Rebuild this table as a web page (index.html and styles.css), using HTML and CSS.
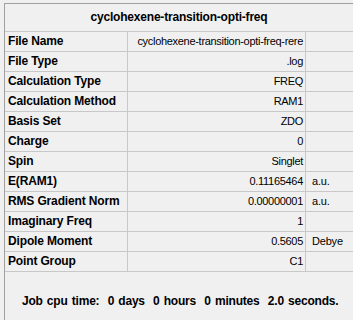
FILE: index.html
```html
<!DOCTYPE html>
<html>
<head>
<meta charset="utf-8">
<link rel="stylesheet" href="styles.css">
</head>
<body>
<div class="panel">
  <div class="title">cyclohexene-transition-opti-freq</div>
  <div class="grid">
    <div class="lbl">File Name</div><div class="val">cyclohexene-transition-opti-freq-rere</div><div class="unit"></div>
    <div class="lbl">File Type</div><div class="val">.log</div><div class="unit"></div>
    <div class="lbl">Calculation Type</div><div class="val">FREQ</div><div class="unit"></div>
    <div class="lbl">Calculation Method</div><div class="val">RAM1</div><div class="unit"></div>
    <div class="lbl">Basis Set</div><div class="val">ZDO</div><div class="unit"></div>
    <div class="lbl">Charge</div><div class="val">0</div><div class="unit"></div>
    <div class="lbl">Spin</div><div class="val">Singlet</div><div class="unit"></div>
    <div class="lbl">E(RAM1)</div><div class="val">0.11165464</div><div class="unit">a.u.</div>
    <div class="lbl">RMS Gradient Norm</div><div class="val">0.00000001</div><div class="unit">a.u.</div>
    <div class="lbl">Imaginary Freq</div><div class="val">1</div><div class="unit"></div>
    <div class="lbl">Dipole Moment</div><div class="val">0.5605</div><div class="unit">Debye</div>
    <div class="lbl">Point Group</div><div class="val">C1</div><div class="unit"></div>
  </div>
  <div class="footer">Job cpu time:  0 days  0 hours  0 minutes  2.0 seconds.</div>
</div>
</body>
</html>
```
FILE: styles.css
```css
html, body {
  margin: 0;
  padding: 0;
  background: #f0f0f0;
  overflow: hidden;
}
body {
  width: 353px;
  height: 320px;
  font-family: "Liberation Sans", Arial, sans-serif;
  color: #000;
}
.panel {
  margin: 3px 0 0 4px;
  border-left: 1px solid #a0a0a0;
  border-top: 1px solid #a0a0a0;
  height: 317px;
  box-sizing: border-box;
}
.title {
  height: 27px;
  line-height: 27px;
  text-align: center;
  font-weight: bold;
  font-size: 12px;
  letter-spacing: -0.2px;
  border-bottom: 1px solid #c8c8c8;
}
.grid {
  display: grid;
  grid-template-columns: 123px 178px 1fr;
}
.grid > div {
  height: 19px;
  line-height: 19px;
  border-bottom: 1px solid #c8c8c8;
  white-space: nowrap;
  overflow: hidden;
}
.lbl {
  font-weight: bold;
  font-size: 12px;
  letter-spacing: -0.15px;
  padding-left: 3px;
  border-right: 1px solid #c8c8c8;
}
.val {
  font-size: 11px;
  letter-spacing: -0.3px;
  text-align: right;
  padding-right: 2px;
  border-right: 1px solid #c8c8c8;
}
.unit {
  font-size: 11px;
  letter-spacing: -0.2px;
  padding-left: 6px;
}
.footer {
  padding: 22px 0 0 17px;
  font-weight: bold;
  font-size: 12px;
  letter-spacing: -0.2px;
  word-spacing: 1px;
  white-space: pre;
  line-height: 14px;
}
```
